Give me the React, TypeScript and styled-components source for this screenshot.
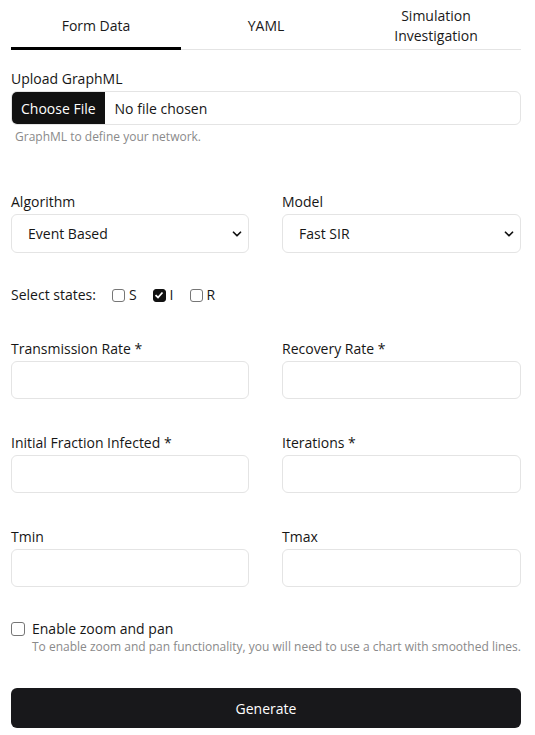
import * as React from "react";
import styled, { createGlobalStyle } from "styled-components";
import { ChevronDown } from "lucide-react";

const GlobalStyle = createGlobalStyle`
  * {
    box-sizing: border-box;
  }
  body {
    margin: 0;
    background: #ffffff;
    color: #111111;
    font-family: "Open Sans", "Noto Sans", sans-serif;
  }
`;

const Page = styled.div`
  display: flex;
  flex-direction: column;
  padding: 0 14px 0 11px;
  width: 535px;
`;

const TabBar = styled.div`
  display: grid;
  grid-template-columns: repeat(3, 1fr);
  border-bottom: 1px solid #e4e4e4;
`;

const Tab = styled.button<{ active?: boolean }>`
  display: flex;
  align-items: center;
  justify-content: center;
  height: 50px;
  padding: 4px 0 0;
  margin-bottom: -1px;
  background: none;
  border: none;
  border-bottom: 3px solid ${(p) => (p.active ? "#000000" : "transparent")};
  font-family: inherit;
  font-size: 14px;
  line-height: 20px;
  color: #1a1a1a;
  text-align: center;
`;

const Form = styled.div`
  display: flex;
  flex-direction: column;
  padding-top: 19px;
`;

const Label = styled.label`
  display: block;
  font-size: 14px;
  font-weight: 500;
  line-height: 20px;
  color: #161616;
  margin-bottom: 2px;
`;

const FileInput = styled.input`
  display: block;
  width: 100%;
  height: 34px;
  font-family: inherit;
  font-size: 14px;
  color: #161616;
  border: 1px solid #e4e4e4;
  border-radius: 6px;
  overflow: hidden;
  padding: 0;

  &::file-selector-button {
    height: 32px;
    margin: 0 10px 0 0;
    padding: 0 9px;
    background: #111111;
    color: #ffffff;
    border: none;
    font-family: inherit;
    font-size: 14px;
  }
`;

const Hint = styled.p<{ gap?: number; indent?: number }>`
  margin: ${(p) => p.gap ?? 4}px 0 0 ${(p) => p.indent ?? 0}px;
  font-size: 12px;
  line-height: 16px;
  color: #8a8a8a;
`;

const Grid = styled.div<{ top: number }>`
  display: grid;
  grid-template-columns: 238px 239px;
  column-gap: 33px;
  margin-top: ${(p) => p.top}px;
`;

const Field = styled.div`
  display: flex;
  flex-direction: column;
`;

const SelectWrap = styled.div`
  position: relative;
`;

const Select = styled.select`
  width: 100%;
  height: 39px;
  padding: 0 30px 0 16px;
  appearance: none;
  background: #ffffff;
  border: 1px solid #e4e4e4;
  border-radius: 6px;
  font-family: inherit;
  font-size: 14px;
  color: #161616;
`;

const Chevron = styled(ChevronDown)`
  position: absolute;
  right: 5px;
  top: 13px;
  pointer-events: none;
`;

const TextInput = styled.input`
  width: 100%;
  height: 38px;
  border: 1px solid #e4e4e4;
  border-radius: 6px;
  font-family: inherit;
  font-size: 14px;
  padding: 0 12px;
`;

const StatesRow = styled.div`
  display: flex;
  align-items: center;
  margin-top: 32px;
  font-size: 14px;
  line-height: 20px;
  color: #161616;
`;

const StatesLabel = styled.span`
  margin-right: 16px;
`;

const StateOption = styled.label`
  display: flex;
  align-items: center;
  gap: 4px;
  margin-right: 16px;
`;

const Box = styled.span<{ checked?: boolean; size: number }>`
  display: inline-flex;
  flex-shrink: 0;
  align-items: center;
  justify-content: center;
  width: ${(p) => p.size}px;
  height: ${(p) => p.size}px;
  border: 1px solid ${(p) => (p.checked ? "#111111" : "#767676")};
  border-radius: 3px;
  background: ${(p) => (p.checked ? "#111111" : "#ffffff")};
`;

const ZoomRow = styled.div`
  display: flex;
  align-items: flex-start;
  gap: 7px;
  margin-top: 32px;
`;

const ZoomBox = styled.div`
  display: flex;
  padding-top: 3px;
`;

const ZoomText = styled.div`
  display: flex;
  flex-direction: column;
`;

const ZoomLabel = styled.span`
  font-size: 14px;
  font-weight: 500;
  line-height: 20px;
  color: #161616;
`;

const GenerateButton = styled.button`
  width: 100%;
  height: 40px;
  margin-top: 33px;
  border: none;
  border-radius: 6px;
  background: #18181b;
  color: #ffffff;
  font-family: inherit;
  font-size: 14px;
`;

const Check = () => (
  <svg width="10" height="10" viewBox="0 0 10 10">
    <path d="M1.5 5.2 L4 7.5 L8.5 2.5" stroke="#ffffff" strokeWidth="1.8" fill="none" />
  </svg>
);

const CheckBox = ({ checked, size }: { checked?: boolean; size: number }) => (
  <Box checked={checked} size={size}>
    {checked && <Check />}
  </Box>
);

const numberFields: [string, string][] = [
  ["Transmission Rate *", "Recovery Rate *"],
  ["Initial Fraction Infected *", "Iterations *"],
  ["Tmin", "Tmax"],
];

const App = () => {
  return (
    <Page>
      <GlobalStyle />
      <TabBar>
        <Tab active>Form Data</Tab>
        <Tab>YAML</Tab>
        <Tab>
          Simulation
          <br />
          Investigation
        </Tab>
      </TabBar>
      <Form>
        <Label>Upload GraphML</Label>
        <FileInput type="file" />
        <Hint indent={4}>GraphML to define your network.</Hint>

        <Grid top={47}>
          <Field>
            <Label>Algorithm</Label>
            <SelectWrap>
              <Select defaultValue="event">
                <option value="event">Event Based</option>
              </Select>
              <Chevron size={14} strokeWidth={3} color="#111111" />
            </SelectWrap>
          </Field>
          <Field>
            <Label>Model</Label>
            <SelectWrap>
              <Select defaultValue="sir">
                <option value="sir">Fast SIR</option>
              </Select>
              <Chevron size={14} strokeWidth={3} color="#111111" />
            </SelectWrap>
          </Field>
        </Grid>

        <StatesRow>
          <StatesLabel>Select states:</StatesLabel>
          <StateOption>
            <CheckBox size={13} />S
          </StateOption>
          <StateOption>
            <CheckBox size={13} checked />I
          </StateOption>
          <StateOption>
            <CheckBox size={13} />R
          </StateOption>
        </StatesRow>

        {numberFields.map(([a, b]) => (
          <Grid key={a} top={34}>
            <Field>
              <Label>{a}</Label>
              <TextInput />
            </Field>
            <Field>
              <Label>{b}</Label>
              <TextInput />
            </Field>
          </Grid>
        ))}

        <ZoomRow>
          <ZoomBox>
            <CheckBox size={14} />
          </ZoomBox>
          <ZoomText>
            <ZoomLabel>Enable zoom and pan</ZoomLabel>
            <Hint gap={0}>To enable zoom and pan functionality, you will need to use a chart with smoothed lines.</Hint>
          </ZoomText>
        </ZoomRow>

        <GenerateButton>Generate</GenerateButton>
      </Form>
    </Page>
  );
};

export default App;
